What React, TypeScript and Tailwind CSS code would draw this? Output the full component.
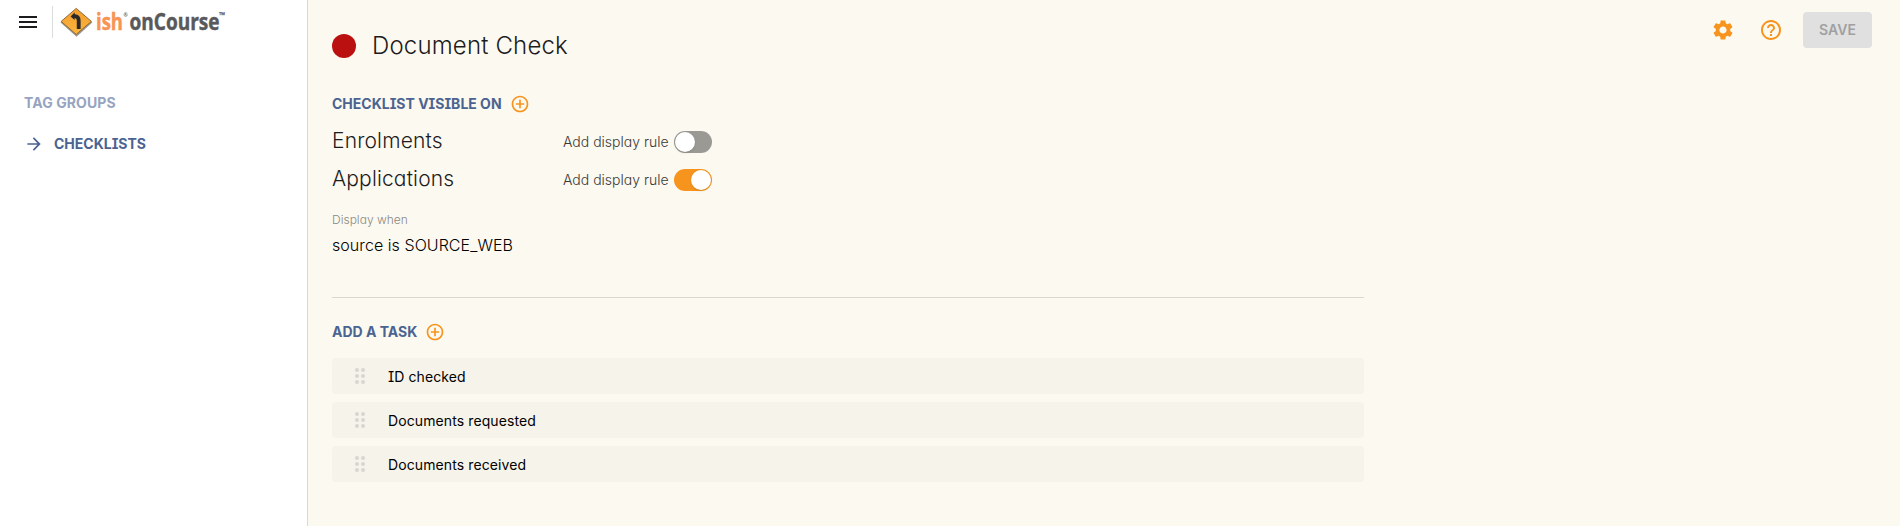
import React from "react";
import {
  MdAddCircleOutline,
  MdArrowForward,
  MdHelpOutline,
  MdMenu,
  MdSettings,
} from "react-icons/md";

const tasks = ["ID checked", "Documents requested", "Documents received"];

function Logo() {
  return (
    <svg width="180" height="40" viewBox="0 0 180 40" className="ml-[7px]" role="img">
      <defs>
        <linearGradient id="sign" x1="0" y1="0" x2="0" y2="1">
          <stop offset="0" stopColor="#f39c2c" />
          <stop offset="1" stopColor="#fdb640" />
        </linearGradient>
      </defs>
      <path d="M16.5 7.5 L32.3 20.5 L16.5 34.8 L0.5 20.5 Z" fill="#9b958c" />
      <path d="M16.2 6.4 L31.4 19.4 L16.2 32.4 L1.2 19.4 Z" fill="url(#sign)" stroke="#8f6a35" strokeWidth="1" strokeLinejoin="round" />
      <path d="M16.8 27 V18.6 Q16.8 16.4 14.6 16 L14.6 18 L10.6 14.4 L14.6 10.6 L14.8 12.2 Q20.6 12.4 20.6 18.6 V27 Z" fill="#2c2a28" />
      <g fontFamily="'Open Sans', sans-serif" fontWeight="700">
        <text x="36" y="28" fontSize="23.5" fill="#f79455" stroke="#f79455" strokeWidth="0.5" textLength="27" lengthAdjust="spacingAndGlyphs">ish</text>
        <text x="63.4" y="15" fontSize="5" fill="#59595b">®</text>
        <text x="69.5" y="28" fontSize="23.5" fill="#59595b" stroke="#59595b" strokeWidth="0.5" textLength="90" lengthAdjust="spacingAndGlyphs">onCourse</text>
        <text x="159" y="16" fontSize="8" fill="#59595b" stroke="#59595b" strokeWidth="0.2">™</text>
      </g>
    </svg>
  );
}

function Toggle({ on }: { on: boolean }) {
  return (
    <span className={`flex h-[22px] w-[38px] items-center rounded-full px-px ${on ? "justify-end bg-[#f7941d]" : "justify-start bg-[#9a9994]"}`}>
      <span className="size-5 rounded-full bg-white shadow-sm" />
    </span>
  );
}

function VisibleOn({ label, on }: { label: string; on: boolean }) {
  return (
    <div className="flex h-[38px] items-center">
      <span className="w-[231px] pb-0.5 text-[21px] font-light tracking-[0.15px] text-[#1c1c1e]">{label}</span>
      <span className="w-[111px] pb-0.5 text-[14px] font-light text-[#3a3a38]">Add display rule</span>
      <Toggle on={on} />
    </div>
  );
}

function SectionTitle({ children }: { children: string }) {
  return (
    <div className="flex h-5 items-center gap-2 text-[14px] font-bold text-[#4b6390]">
      <span className="pb-0.5">{children}</span>
      <MdAddCircleOutline className="size-5 text-[#f7941d]" />
    </div>
  );
}

function DragHandle() {
  return (
    <span className="grid grid-cols-2 gap-0.5">
      {[0, 1, 2, 3, 4, 5].map((dot) => (
        <span key={dot} className="size-1 rounded-full bg-[#d8d6d0]" />
      ))}
    </span>
  );
}

export default function App() {
  return (
    <div className="flex h-[526px] w-[1900px] overflow-hidden bg-[#fcf9f0] font-['Inter',sans-serif] [font-feature-settings:'cv08','cv11']">
      <aside className="w-[308px] shrink-0 border-r border-[#ddd9c8] bg-white">
        <div className="flex h-11 items-center pl-4">
          <MdMenu className="size-6 text-[#1c1c1e]" />
          <span className="ml-3 h-8 w-px bg-[#dcdcdc]" />
          <Logo />
        </div>
        <div className="mt-[49px] pl-6 text-[14px] leading-5 font-bold tracking-[0.1px] text-[#97a4c1]">TAG GROUPS</div>
        <div className="mt-[21px] flex h-5 items-center gap-2.5 pl-6 text-[14px] font-bold text-[#4b6390]">
          <MdArrowForward className="size-5" />
          <span className="pb-px">CHECKLISTS</span>
        </div>
      </aside>

      <main className="w-[1056px] shrink-0 pl-6">
        <div className="mt-7 flex h-9 items-center gap-4">
          <span className="size-6 rounded-full bg-[#bb1010]" />
          <h1 className="text-[24px] font-light tracking-[0.17px] text-[#1c1c1e]">Document Check</h1>
        </div>
        <div className="mt-[30px]">
          <SectionTitle>CHECKLIST VISIBLE ON</SectionTitle>
        </div>
        <div className="mt-[9px]">
          <VisibleOn label="Enrolments" on={false} />
          <VisibleOn label="Applications" on />
        </div>
        <div className="mt-[13px] text-[12px] leading-4 font-light text-[#8a8985]">Display when</div>
        <div className="mt-[5px] text-[16px] leading-6 font-light tracking-[0.06px] text-black">source is SOURCE_WEB</div>
        <div className="mt-[40px] h-px bg-[#dad7d0]" />
        <div className="mt-[24px]">
          <SectionTitle>ADD A TASK</SectionTitle>
        </div>
        <ul className="mt-4 flex flex-col gap-2">
          {tasks.map((task) => (
            <li key={task} className="flex h-9 items-center gap-[23px] rounded bg-[#f6f3eb] pl-[23px] text-[14px] tracking-[0.1px] text-black">
              <DragHandle />
              <span>{task}</span>
            </li>
          ))}
        </ul>
      </main>

      <div className="flex h-15 grow items-center justify-end pr-7">
        <MdSettings className="size-6 text-[#f7941d]" />
        <MdHelpOutline className="ml-6 size-6 text-[#f7941d]" />
        <button className="ml-5 h-9 w-[69px] rounded bg-[#e0e0e0] pb-px text-[14px] font-semibold text-[#a0a0a0]">SAVE</button>
      </div>
    </div>
  );
}
